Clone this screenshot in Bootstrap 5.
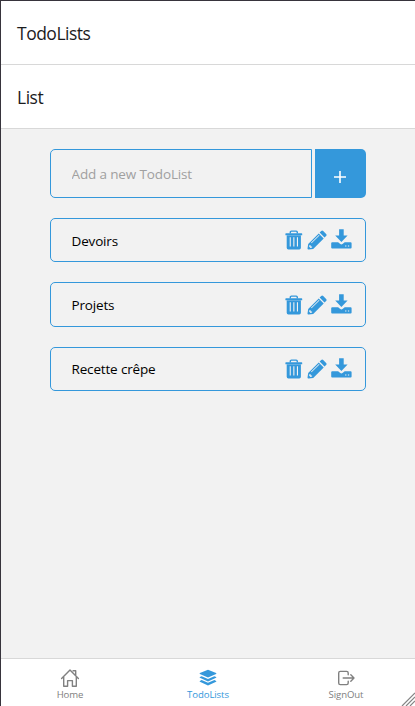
<!DOCTYPE html>
<html lang="fr">
<head>
<meta charset="utf-8">
<meta name="viewport" content="width=device-width, initial-scale=1">
<title>TodoLists</title>
<link rel="stylesheet" href="https://cdn.jsdelivr.net/npm/bootstrap@5.3.0/dist/css/bootstrap.min.css">
<style>
body{font-family:"Open Sans","Noto Sans",sans-serif;background:#f2f2f2;color:#000}
.app{height:706px;border-top:1px solid #37343c;border-left:1px solid #37343c}
.bar{height:64px;border-bottom:1px solid #d8d8d8;color:#1c1c1e;font-size:17.5px;line-height:24px;letter-spacing:-.5px;padding:1px 16px 0}
.content{padding:20px 49px 0}
.field{width:262px;height:49px;border:1px solid #3498db;border-radius:5px 0 0 5px;background:transparent;padding:1px 20px 0 20.5px;font-size:13.5px;letter-spacing:-.14px;outline:0}
.field::placeholder{color:#a0a0a0;opacity:1}
.add{width:51px;height:49px;margin-left:3px;border-radius:0 5px 5px 0;background:#3498db;border:0;padding:6px 1px 0 0}
.todo{height:44.4px;margin-top:20px;border:1px solid #3498db;border-radius:5px;padding:0 13px 0 20.5px;font-size:13.5px;letter-spacing:-.16px}
.todo span{padding-top:1px}
.tools{color:#3498db;gap:4px}
.dl{margin-top:-1px}
.tabs{height:48px;border-top:1px solid #d8d8d8;color:#808080;font-size:9.6px;line-height:13px;letter-spacing:-.1px;padding-top:9px}
.tabs .active{color:#3498db}
.grip{right:0;bottom:0}
svg{display:block;flex:none}
</style>
</head>
<body>
<svg width="0" height="0" class="position-absolute" aria-hidden="true">
<symbol id="trash" viewBox="0 0 18 20"><path d="M5.3 3.5V2.2Q5.3 1.1 6.4 1.1h4.8q1.1 0 1.1 1.1v1.3" fill="none" stroke="currentColor" stroke-width="1.4"/><path fill="currentColor" fill-rule="evenodd" d="M1 3.2h15.6q.6 0 .6.6v1.4H.4V3.8q0-.6.6-.6zM1.7 5h14.2v12.7q0 1.7-1.7 1.7H3.4q-1.7 0-1.7-1.7zM4.7 7.2v9.4h1.1V7.2zm3.6 0v9.4h1.1V7.2zm3.6 0v9.4H13V7.2z"/></symbol>
<symbol id="pencil" viewBox="0 0 20 20"><path fill="currentColor" fill-rule="evenodd" d="M11.7 3.4l5 5L6.2 18.9l-4.6.6q-1.2.1-1.1-1.1l.7-4.5zM2.3 15.2l-.2 1.4 1.3 1.3 1.7-.3v-1.2H3.7v-1.2zM4.6 13.3l7.9-7.8-.6-.6L4 12.7z"/><path fill="currentColor" d="M12.6 2.6l1.6-1.6q1-1 2 0l2.9 2.9q1 1 0 2l-1.6 1.6z"/></symbol>
<symbol id="download" viewBox="0 0 21 20"><path fill="currentColor" fill-rule="evenodd" d="M8.1.3h4.6v6.1h3.9L10.4 13 4.2 6.4h3.9zM1.2 13.2h5.9l2.2 1.9q1.1.9 2.2 0l2.2-1.9h5.9q1 0 1 1v4.2q0 1-1 1H1.2q-1 0-1-1v-4.2q0-1 1-1zM14.1 16.4v1.2h1.3v-1.2zm2.8 0v1.2h1.3v-1.2z"/></symbol>
</svg>
<div class="app d-flex flex-column position-relative">
<header class="bar bg-white d-flex align-items-center">TodoLists</header>
<div class="bar bg-white d-flex align-items-center">List</div>
<main class="content flex-grow-1">
<form class="d-flex"><input class="field" placeholder="Add a new TodoList" aria-label="Add a new TodoList"><button type="button" class="add d-flex align-items-center justify-content-center" aria-label="Add"><svg width="12" height="12" viewBox="0 0 12 12"><path d="M6 0v12M0 6h12" stroke="#fff" stroke-width="1.6"/></svg></button></form>
<div class="todo d-flex align-items-center justify-content-between"><span>Devoirs</span><div class="tools d-flex"><svg width="18" height="20"><use href="#trash"/></svg><svg width="20" height="20"><use href="#pencil"/></svg><svg class="dl" width="21" height="20"><use href="#download"/></svg></div></div>
<div class="todo d-flex align-items-center justify-content-between"><span>Projets</span><div class="tools d-flex"><svg width="18" height="20"><use href="#trash"/></svg><svg width="20" height="20"><use href="#pencil"/></svg><svg class="dl" width="21" height="20"><use href="#download"/></svg></div></div>
<div class="todo d-flex align-items-center justify-content-between"><span>Recette crêpe</span><div class="tools d-flex"><svg width="18" height="20"><use href="#trash"/></svg><svg width="20" height="20"><use href="#pencil"/></svg><svg class="dl" width="21" height="20"><use href="#download"/></svg></div></div>
</main>
<nav class="tabs bg-white d-flex">
<div class="col d-flex flex-column align-items-center"><svg width="20" height="20" viewBox="0 0 20 20" fill="none" stroke="currentColor" stroke-width="1.4" stroke-linejoin="round" stroke-linecap="round"><path d="M1.6 10.5L10 1.9l8.4 8.6M3.7 9v9.3h3.9v-5.7h4.8v5.7h3.9V9M13.1 2.7h2.6v4.2"/></svg><span>Home</span></div>
<div class="col d-flex flex-column align-items-center active"><svg width="20" height="20" viewBox="0 0 20 20" fill="currentColor"><path d="M10 1.7l8.1 3.4q.6.4 0 .8L10 9.5 1.9 5.9q-.6-.4 0-.8zM3.6 8.2l6.4 2.7 6.4-2.7 1.7.8q.6.4 0 .8L10 13.4 1.9 9.8q-.6-.4 0-.8zM3.6 12.1l6.4 2.7 6.4-2.7 1.7.8q.6.4 0 .8L10 17.4l-8.1-3.7q-.6-.4 0-.8z"/></svg><span>TodoLists</span></div>
<div class="col d-flex flex-column align-items-center"><svg width="20" height="20" viewBox="0 0 20 20" fill="none" stroke="currentColor" stroke-width="1.4" stroke-linejoin="round" stroke-linecap="round"><path d="M12.2 6.7V5q0-1.6-1.6-1.6H4.3Q2.7 3.4 2.7 5v10q0 1.6 1.6 1.6h6.3q1.6 0 1.6-1.6v-1.7M7.2 10h10.6M14.8 6.8L18 10l-3.2 3.2"/></svg><span>SignOut</span></div>
</nav>
<svg class="grip position-absolute" width="14" height="14" viewBox="0 0 14 14"><path d="M1 14L14 1M5 14l9-9M9 14l5-5" stroke="#858585" stroke-width="1.2"/></svg>
</div>
<script src="https://cdn.jsdelivr.net/npm/bootstrap@5.3.0/dist/js/bootstrap.bundle.min.js"></script>
</body>
</html>
